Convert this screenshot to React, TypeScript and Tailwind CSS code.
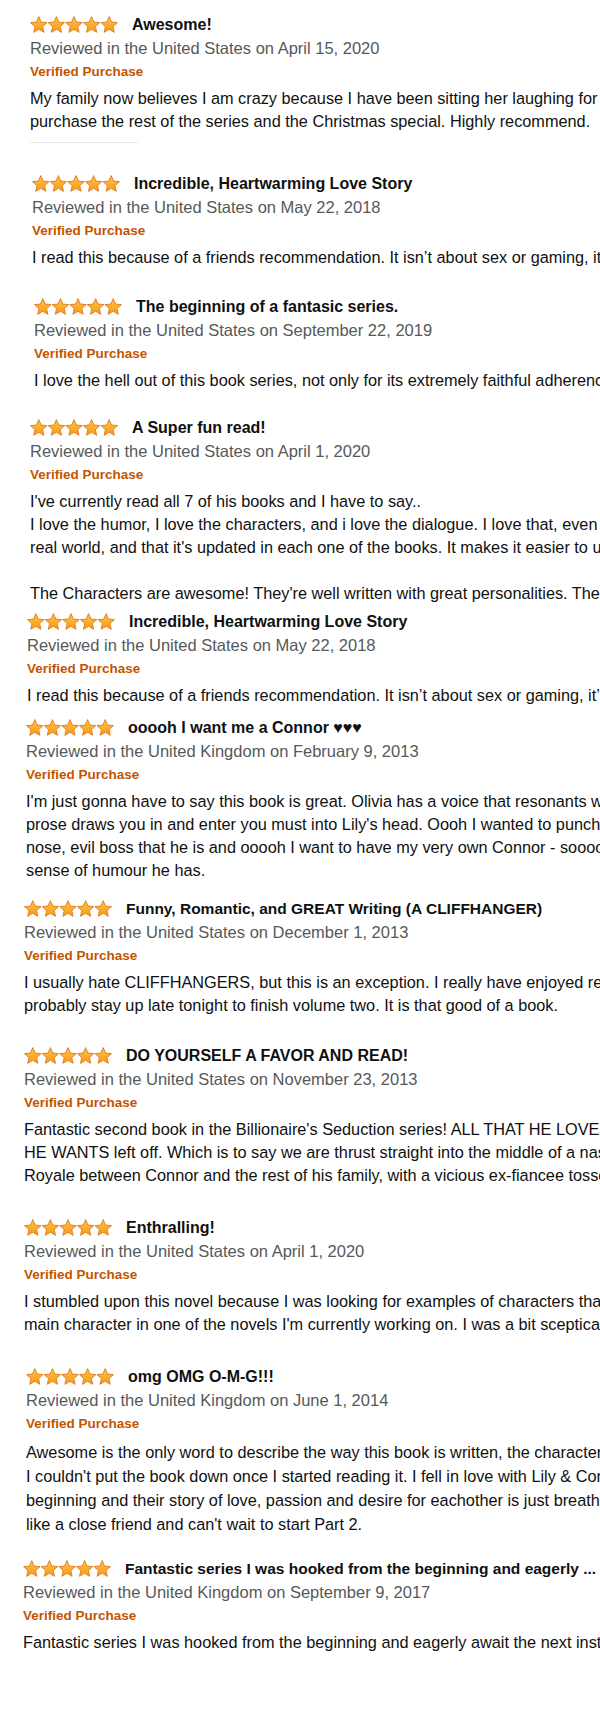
import React, { useId } from 'react';
import clsx from 'clsx';

type Review = {
  title: string;
  meta: string;
  lines: string[];
  // left inset + space above each pasted review
  box: string;
  body?: string;
  titleSize?: string;
};

const reviews: Review[] = [
  {
    title: 'Awesome!',
    meta: 'Reviewed in the United States on April 15, 2020',
    lines: [
      'My family now believes I am crazy because I have been sitting her laughing for',
      'purchase the rest of the series and the Christmas special. Highly recommend.',
    ],
    box: 'pl-[30px] mt-[12px]',
  },
  {
    title: 'Incredible, Heartwarming Love Story',
    meta: 'Reviewed in the United States on May 22, 2018',
    lines: ['I read this because of a friends recommendation. It isn\u2019t about sex or gaming, it\u2019s about love'],
    box: 'pl-[32px] mt-[27px]',
  },
  {
    title: 'The beginning of a fantasic series.',
    meta: 'Reviewed in the United States on September 22, 2019',
    lines: ['I love the hell out of this book series, not only for its extremely faithful adherence to'],
    box: 'pl-[34px] mt-[25px]',
  },
  {
    title: 'A Super fun read!',
    meta: 'Reviewed in the United States on April 1, 2020',
    lines: [
      "I've currently read all 7 of his books and I have to say..",
      'I love the humor, I love the characters, and i love the dialogue. I love that, even though',
      "real world, and that it's updated in each one of the books. It makes it easier to understand",
      '',
      "The Characters are awesome! They're well written with great personalities. The story",
    ],
    box: 'pl-[30px] mt-[23px]',
  },
  {
    title: 'Incredible, Heartwarming Love Story',
    meta: 'Reviewed in the United States on May 22, 2018',
    lines: ['I read this because of a friends recommendation. It isn\u2019t about sex or gaming, it\u2019s about love'],
    box: 'pl-[27px] mt-[4px]',
  },
  {
    title: 'ooooh I want me a Connor \u2665\u2665\u2665',
    meta: 'Reviewed in the United Kingdom on February 9, 2013',
    lines: [
      "I'm just gonna have to say this book is great. Olivia has a voice that resonants with",
      "prose draws you in and enter you must into Lily's head. Oooh I wanted to punch him",
      'nose, evil boss that he is and ooooh I want to have my very own Connor - soooo',
      'sense of humour he has.',
    ],
    box: 'pl-[26px] mt-[8px]',
  },
  {
    title: 'Funny, Romantic, and GREAT Writing (A CLIFFHANGER)',
    meta: 'Reviewed in the United States on December 1, 2013',
    lines: [
      'I usually hate CLIFFHANGERS, but this is an exception. I really have enjoyed reading',
      'probably stay up late tonight to finish volume two. It is that good of a book.',
    ],
    box: 'pl-[24px] mt-[14px]',
    titleSize: 'text-[15.5px]',
  },
  {
    title: 'DO YOURSELF A FAVOR AND READ!',
    meta: 'Reviewed in the United States on November 23, 2013',
    lines: [
      "Fantastic second book in the Billionaire's Seduction series! ALL THAT HE LOVES (Part 1)",
      'HE WANTS left off. Which is to say we are thrust straight into the middle of a nasty',
      'Royale between Connor and the rest of his family, with a vicious ex-fiancee tossed in',
    ],
    box: 'pl-[24px] mt-[26px]',
  },
  {
    title: 'Enthralling!',
    meta: 'Reviewed in the United States on April 1, 2020',
    lines: [
      'I stumbled upon this novel because I was looking for examples of characters that',
      "main character in one of the novels I'm currently working on. I was a bit sceptical",
    ],
    box: 'pl-[24px] mt-[28px]',
  },
  {
    title: 'omg OMG O-M-G!!!',
    meta: 'Reviewed in the United Kingdom on June 1, 2014',
    lines: [
      'Awesome is the only word to describe the way this book is written, the characters',
      "I couldn't put the book down once I started reading it. I fell in love with Lily & Connor",
      'beginning and their story of love, passion and desire for eachother is just breathtaking',
      "like a close friend and can't wait to start Part 2.",
    ],
    box: 'pl-[26px] mt-[28px]',
    body: 'mt-[4px] leading-[24px]',
  },
  {
    title: 'Fantastic series I was hooked from the beginning and eagerly ...',
    meta: 'Reviewed in the United Kingdom on September 9, 2017',
    lines: ['Fantastic series I was hooked from the beginning and eagerly await the next installment'],
    box: 'pl-[23px] mt-[20px]',
    titleSize: 'text-[15.5px]',
  },
];

function starPoints(cx: number, cy: number, outer: number, inner: number) {
  const pts: string[] = [];
  for (let i = 0; i < 10; i++) {
    const r = i % 2 === 0 ? outer : inner;
    const a = -Math.PI / 2 + (i * Math.PI) / 5;
    pts.push(`${(cx + r * Math.cos(a)).toFixed(2)},${(cy + r * Math.sin(a)).toFixed(2)}`);
  }
  return pts.join(' ');
}

function Stars() {
  const id = useId();
  return (
    <svg width="88" height="17" viewBox="0 0 88 17" className="shrink-0">
      <defs>
        <linearGradient id={id} x1="0" y1="0" x2="0" y2="1">
          <stop offset="0%" stopColor="#ffc447" />
          <stop offset="100%" stopColor="#f7991b" />
        </linearGradient>
      </defs>
      {[0, 1, 2, 3, 4].map((i) => (
        <polygon
          key={i}
          points={starPoints(8.8 + i * 17.6, 9.3, 8.7, 4)}
          fill={`url(#${id})`}
          stroke="#e07b1c"
          strokeWidth="0.9"
          strokeLinejoin="round"
        />
      ))}
    </svg>
  );
}

function ReviewBlock({ r, divider }: { r: Review; divider?: boolean }) {
  return (
    <div className={clsx('flex flex-col', r.box)}>
      <div className="flex h-6 items-center gap-[14px]">
        <Stars />
        <span className={clsx('pt-[2px] font-bold text-[#0f1111]', r.titleSize ?? 'text-[16px]')}>{r.title}</span>
      </div>
      <div className="text-[16.5px] leading-6 text-[#565959]">{r.meta}</div>
      <div className="text-[13.5px] font-bold leading-6 text-[#c45500]">Verified Purchase</div>
      <div className={clsx('text-[16.3px] text-[#0f1111]', r.body ?? 'mt-[3px] leading-[23px]')}>
        {r.lines.map((line, i) => (
          <div key={i}>{line || '\u00a0'}</div>
        ))}
      </div>
      {divider && <div className="mt-[9px] h-[2px] w-[108px] rounded-t-md border-t border-[#e6e6e6]" />}
    </div>
  );
}

export default function App() {
  return (
    <div className="flex min-h-[1717px] w-[600px] flex-col overflow-hidden whitespace-nowrap bg-white font-['Liberation_Sans',Arial,sans-serif]">
      {reviews.map((r, i) => (
        <ReviewBlock key={i} r={r} divider={i === 0} />
      ))}
    </div>
  );
}
